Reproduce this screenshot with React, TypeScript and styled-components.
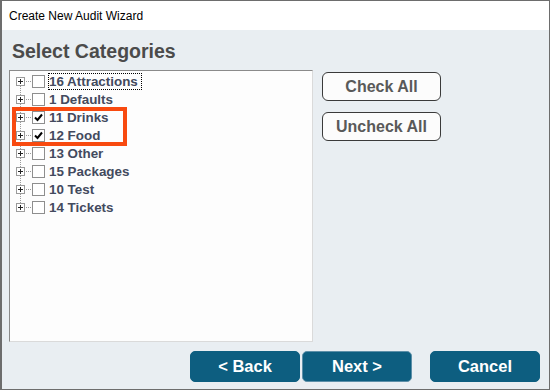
import React from "react";
import styled, { createGlobalStyle } from "styled-components";

const GlobalStyle = createGlobalStyle`
  html, body {
    margin: 0;
    padding: 0;
    background: #ffffff;
  }
  * {
    box-sizing: border-box;
  }
`;

const Window = styled.div`
  width: 550px;
  height: 390px;
  display: flex;
  flex-direction: column;
  border: 1px solid #6d6d6d;
  border-left-width: 2px;
  background: #e9eef2;
  font-family: "Liberation Sans", Arial, sans-serif;
`;

const TitleBar = styled.div`
  height: 29px;
  flex: none;
  background: #ffffff;
  display: flex;
  align-items: center;
  padding-left: 7px;
  font-size: 12px;
  color: #000000;
`;

const Body = styled.div`
  flex: 1;
  display: flex;
  flex-direction: column;
  padding: 0 8px 0 7px;
`;

const Heading = styled.h1`
  margin: 0;
  height: 40px;
  display: flex;
  align-items: center;
  padding: 2px 0 0 3px;
  font-size: 19.5px;
  font-weight: bold;
  color: #4b4b4b;
`;

const Main = styled.div`
  display: flex;
  gap: 9px;
  height: 272px;
`;

const TreePanel = styled.div`
  position: relative;
  width: 304px;
  height: 100%;
  background: #fdfdfd;
  border: 1px solid #dadada;
  border-top-color: #8a8a8a;
  border-left-color: #8a8a8a;
  padding: 1px 0 0 5px;
`;

const Row = styled.div`
  display: flex;
  align-items: center;
  height: 18px;
`;

const Box = styled.span`
  width: 13px;
  height: 13px;
  margin-right: 3px;
  border: 1px solid #8e8e8e;
  background: #ffffff;
  display: flex;
  align-items: center;
  justify-content: center;
`;

const Label = styled.span<{ $focused?: boolean }>`
  font-size: 13.4px;
  font-weight: bold;
  color: #434a5e;
  line-height: 15px;
  padding: 0 3px 0 0;
  border: 1px dotted ${(p) => (p.$focused ? "#000" : "transparent")};
`;

const Highlight = styled.div`
  position: absolute;
  left: 2px;
  top: 36px;
  width: 115px;
  height: 39px;
  border: 4px solid #f84a10;
  pointer-events: none;
`;

const Side = styled.div`
  display: flex;
  flex-direction: column;
  gap: 11px;
  padding-top: 2px;
`;

const GhostButton = styled.button`
  width: 119px;
  height: 29px;
  border: 1px solid #3a3a3a;
  border-radius: 6px;
  background: #fcfcfc;
  font-family: "Liberation Sans", Arial, sans-serif;
  font-size: 16px;
  font-weight: bold;
  color: #595959;
  padding: 0;
`;

const Footer = styled.div`
  display: flex;
  justify-content: flex-end;
  align-items: flex-start;
  padding: 9px 1px 0 0;
`;

const NavButton = styled.button<{ $gapAfter?: number; $edge?: boolean }>`
  width: 110px;
  height: 31px;
  margin-right: ${(p) => p.$gapAfter ?? 0}px;
  border: 1px solid ${(p) => (p.$edge ? "#5c8fa8" : "#0d5e80")};
  border-radius: 5px;
  background: #0d5e80;
  color: #ffffff;
  font-family: "Liberation Sans", Arial, sans-serif;
  font-size: 16.5px;
  font-weight: bold;
  padding: 0;
`;

const categories = [
  { name: "16 Attractions", checked: false },
  { name: "1 Defaults", checked: false },
  { name: "11 Drinks", checked: true },
  { name: "12 Food", checked: true },
  { name: "13 Other", checked: false },
  { name: "15 Packages", checked: false },
  { name: "10 Test", checked: false },
  { name: "14 Tickets", checked: false },
];

// plus box with dotted tree lines
const Expander = ({ first, last }: { first: boolean; last: boolean }) => (
  <svg width="17" height="18" viewBox="0 0 17 18" style={{ flex: "none" }}>
    {!first && (
      <line x1="5.5" y1="0" x2="5.5" y2="5" stroke="#9a9a9a" strokeDasharray="1 1" />
    )}
    {!last && (
      <line x1="5.5" y1="14" x2="5.5" y2="18" stroke="#9a9a9a" strokeDasharray="1 1" />
    )}
    <line x1="11" y1="9.5" x2="17" y2="9.5" stroke="#9a9a9a" strokeDasharray="1 1" />
    <rect x="1.5" y="5.5" width="8" height="8" fill="#fff" stroke="#9a9a9a" />
    <line x1="3" y1="9.5" x2="8" y2="9.5" stroke="#222" />
    <line x1="5.5" y1="7" x2="5.5" y2="12" stroke="#222" />
  </svg>
);

const Check = () => (
  <svg width="9" height="9" viewBox="0 0 9 9">
    <path d="M1 4.5 L3.5 7 L8 1.5" fill="none" stroke="#000" strokeWidth="2" />
  </svg>
);

const App = () => {
  return (
    <>
      <GlobalStyle />
      <Window>
        <TitleBar>Create New Audit Wizard</TitleBar>
        <Body>
          <Heading>Select Categories</Heading>
          <Main>
            <TreePanel>
              {categories.map((c, i) => (
                <Row key={c.name}>
                  <Expander first={i === 0} last={i === categories.length - 1} />
                  <Box>{c.checked && <Check />}</Box>
                  <Label $focused={i === 0}>{c.name}</Label>
                </Row>
              ))}
              <Highlight />
            </TreePanel>
            <Side>
              <GhostButton>Check All</GhostButton>
              <GhostButton>Uncheck All</GhostButton>
            </Side>
          </Main>
          <Footer>
            <NavButton $gapAfter={2}>&lt; Back</NavButton>
            <NavButton $gapAfter={18} $edge>
              Next &gt;
            </NavButton>
            <NavButton>Cancel</NavButton>
          </Footer>
        </Body>
      </Window>
    </>
  );
};

export default App;
